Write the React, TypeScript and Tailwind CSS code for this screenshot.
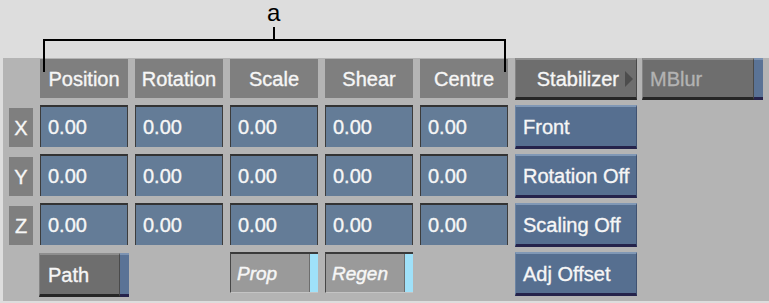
const headers = [ 'Position', 'Rotation', 'Scale', 'Shear', 'Centre' ];
const axes = [
    { name: 'X', action: 'Front' },
    { name: 'Y', action: 'Rotation Off' },
    { name: 'Z', action: 'Scaling Off' },
];

const BlueButton = ( { label }: { label: string } ) => (
    <div className="h-[44px] flex items-center pl-[7px] bg-[#566f90] border-t-2 border-t-[#8098b6] border-b-[3px] border-b-[#25234b] border-l border-l-[#6c84a3] border-r border-r-[#3f5272] text-[#f6f6f6] text-[20px] leading-none [-webkit-text-stroke:0.35px_#f6f6f6]">
        { label }
    </div>
);

const GrayButton = ( { label, strip, dim, arrow }: { label: string; strip?: boolean; dim?: boolean; arrow?: boolean } ) => (
    <div className="flex h-full">
        <div className={ `flex-1 flex items-center bg-[#6e6e6e] border-t-2 border-t-[#8e8e8e] border-b-[3px] border-b-[#262626] border-l border-l-[#858585] border-r border-r-[#4a4a4a] text-[20px] leading-none ${ dim ? 'text-[#b3b3b3] pl-[7px] [-webkit-text-stroke:0.35px_#b3b3b3]' : 'text-[#f6f6f6] pl-[8px] [-webkit-text-stroke:0.35px_#f6f6f6]' } ${ arrow ? 'justify-end pr-[2px]' : '' }` }>
            <span>{ label }</span>
            { arrow && (
                <svg width="10" height="16" viewBox="0 0 10 16" className="ml-[5px]">
                    <polygon points="1,0 9,8 1,16" fill="#4d4d4d" />
                </svg>
            ) }
        </div>
        { strip && (
            <div className="w-[9px] bg-[#5a7396] border-t-2 border-t-[#7c93b2] border-b-[3px] border-b-[#25234b]" />
        ) }
    </div>
);

const Toggle = ( { label }: { label: string } ) => (
    <div className="flex h-[41px] border-t-2 border-t-[#3a3a3a] border-l border-l-[#474747] border-b border-b-[#c4c4c4]">
        <div className="flex-1 flex items-center pl-[6px] bg-[#9a9a9a] text-[#f6f6f6] text-[19px] italic leading-none [-webkit-text-stroke:0.45px_#f6f6f6]">
            { label }
        </div>
        <div className="w-[9px] bg-[#9fe1f9] border-l border-l-[#6d6d6d]" />
    </div>
);

const Input = () => (
    <div className="h-[42px] flex items-center pl-[7px] bg-[#647c97] border-t-2 border-t-[#333333] border-x border-x-[#3c3c3c] text-[#f6f6f6] text-[20px] leading-none [-webkit-text-stroke:0.35px_#f6f6f6]">
        0.00
    </div>
);

const App = () =>
{
    return (
        <div className="relative w-[769px] h-[303px] bg-[#dddddd] pt-[58px] pl-[3px] overflow-hidden font-['Liberation_Sans',Arial,sans-serif]">
            <div className="h-[243px] bg-[#b4b4b4] pl-[6px]">
                <div className="grid grid-cols-[24px_88px_88px_88px_88px_88px_122px_121px] grid-rows-[47px_49px_49px_49px_49px] gap-x-[7px]">
                    {/* header row */ }
                    <div />
                    { headers.map( ( h ) => (
                        <div key={ h } className="mt-px h-[39px] flex items-center justify-center bg-[#7f7f7f] text-[#f6f6f6] text-[20px] leading-none [-webkit-text-stroke:0.35px_#f6f6f6]">
                            { h }
                        </div>
                    ) ) }
                    <div className="h-[42px]">
                        <GrayButton label="Stabilizer" arrow />
                    </div>
                    <div className="h-[42px] -ml-[2px] w-[121px]">
                        <GrayButton label="MBlur" strip dim />
                    </div>

                    {/* X Y Z rows */ }
                    { axes.map( ( a ) => (
                        <div key={ a.name } className="contents">
                            <div className="mt-[3px] h-[39px] flex items-center justify-center bg-[#7f7f7f] text-[#f6f6f6] text-[20px] leading-none [-webkit-text-stroke:0.35px_#f6f6f6]">
                                { a.name }
                            </div>
                            { headers.map( ( h ) => (
                                <Input key={ h } />
                            ) ) }
                            <BlueButton label={ a.action } />
                            <div />
                        </div>
                    ) ) }

                    {/* bottom row */ }
                    <div />
                    <div className="mt-px h-[44px] -ml-px w-[90px]">
                        <GrayButton label="Path" strip />
                    </div>
                    <div />
                    <Toggle label="Prop" />
                    <Toggle label="Regen" />
                    <div />
                    <BlueButton label="Adj Offset" />
                    <div />
                </div>
            </div>

            {/* callout bracket */ }
            <svg className="absolute left-0 top-0 pointer-events-none" width="769" height="80">
                <rect x="43" y="39" width="463" height="2" fill="#000" />
                <rect x="43" y="39" width="2" height="33" fill="#000" />
                <rect x="504" y="39" width="2" height="33" fill="#000" />
                <rect x="273" y="27" width="2" height="13" fill="#000" />
            </svg>
            <div className="absolute left-[267px] top-[1px] text-[24px] leading-none text-black">a</div>
        </div>
    );
};

export default App;
